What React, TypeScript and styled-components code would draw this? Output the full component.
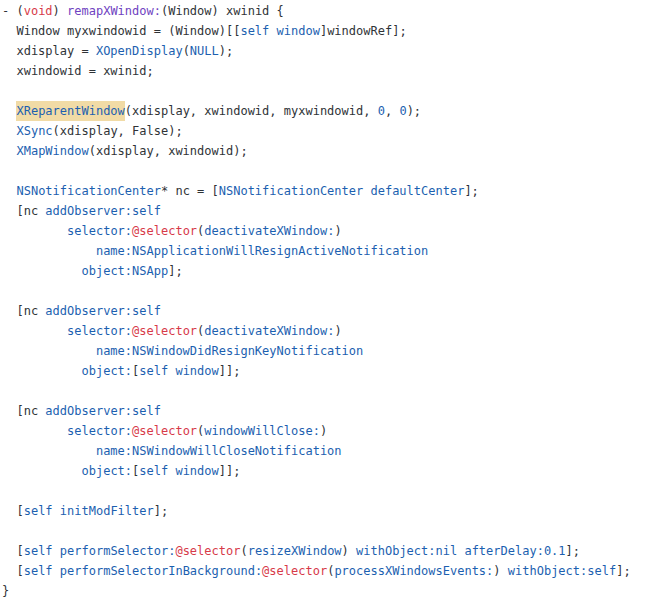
import React from "react";
import styled, { createGlobalStyle, css } from "styled-components";

const GlobalStyle = createGlobalStyle`
  html, body {
    margin: 0;
    padding: 0;
    background: #ffffff;
  }
`;

type Kind = "p" | "k" | "f" | "b" | "h";

const CodeBlock = styled.pre`
  margin: 0;
  padding: 1px 0 0 2px;
  font-family: "DejaVu Sans Mono", "Liberation Mono", monospace;
  font-size: 12px;
  line-height: 20px;
  color: #2f3337;
  background: #ffffff;
  white-space: pre;
`;

const Line = styled.div`
  height: 20px;
`;

const Token = styled.span<{ $kind: Kind }>`
  ${({ $kind }) => {
    switch ($kind) {
      case "k":
        return css`color: #d73a49;`;
      case "f":
        return css`color: #6f42c1;`;
      case "b":
        return css`color: #1c5fb0;`;
      case "h":
        return css`
          color: #1c5fb0;
          background: #f1dba6;
          display: inline-block;
          height: 20px;
          vertical-align: top;
        `;
      default:
        return css`color: #2f3337;`;
    }
  }}
`;

type Tok = [Kind, string];

const observer = (sel: string, name: string, obj: Tok[]): Tok[][] => [
  [["p", "  [nc "], ["b", "addObserver:self"]],
  [["p", "         "], ["b", "selector:"], ["k", "@selector"], ["p", "("], ["b", sel], ["p", ")"]],
  [["p", "             "], ["b", "name:" + name]],
  [["p", "           "], ...obj],
];

const lines: Tok[][] = [
  [["p", "- ("], ["k", "void"], ["p", ") "], ["f", "remapXWindow:"], ["p", "(Window) xwinid {"]],
  [["p", "  Window myxwindowid = (Window)[["], ["b", "self window"], ["p", "]windowRef];"]],
  [["p", "  xdisplay = "], ["b", "XOpenDisplay"], ["p", "("], ["b", "NULL"], ["p", ");"]],
  [["p", "  xwindowid = xwinid;"]],
  [],
  [["p", "  "], ["h", "XReparentWindow"], ["p", "(xdisplay, xwindowid, myxwindowid, "], ["b", "0"], ["p", ", "], ["b", "0"], ["p", ");"]],
  [["p", "  "], ["b", "XSync"], ["p", "(xdisplay, False);"]],
  [["p", "  "], ["b", "XMapWindow"], ["p", "(xdisplay, xwindowid);"]],
  [],
  [["p", "  "], ["b", "NSNotificationCenter"], ["p", "* nc = ["], ["b", "NSNotificationCenter defaultCenter"], ["p", "];"]],
  ...observer("deactivateXWindow:", "NSApplicationWillResignActiveNotification", [["b", "object:NSApp"], ["p", "];"]]),
  [],
  ...observer("deactivateXWindow:", "NSWindowDidResignKeyNotification", [["b", "object:"], ["p", "["], ["b", "self window"], ["p", "]];"]]),
  [],
  ...observer("windowWillClose:", "NSWindowWillCloseNotification", [["b", "object:"], ["p", "["], ["b", "self window"], ["p", "]];"]]),
  [],
  [["p", "  ["], ["b", "self initModFilter"], ["p", "];"]],
  [],
  [["p", "  ["], ["b", "self performSelector:"], ["k", "@selector"], ["p", "("], ["b", "resizeXWindow"], ["p", ") "], ["b", "withObject:nil afterDelay:0.1"], ["p", "];"]],
  [["p", "  ["], ["b", "self performSelectorInBackground:"], ["k", "@selector"], ["p", "("], ["b", "processXWindowsEvents:"], ["p", ") "], ["b", "withObject:self"], ["p", "];"]],
  [["p", "}"]],
];

export default function App() {
  return (
    <>
      <GlobalStyle />
      <CodeBlock>
        {lines.map((toks, i) => (
          <Line key={i}>
            {toks.map(([k, t], j) => (
              <Token key={j} $kind={k}>
                {t}
              </Token>
            ))}
          </Line>
        ))}
      </CodeBlock>
    </>
  );
}
